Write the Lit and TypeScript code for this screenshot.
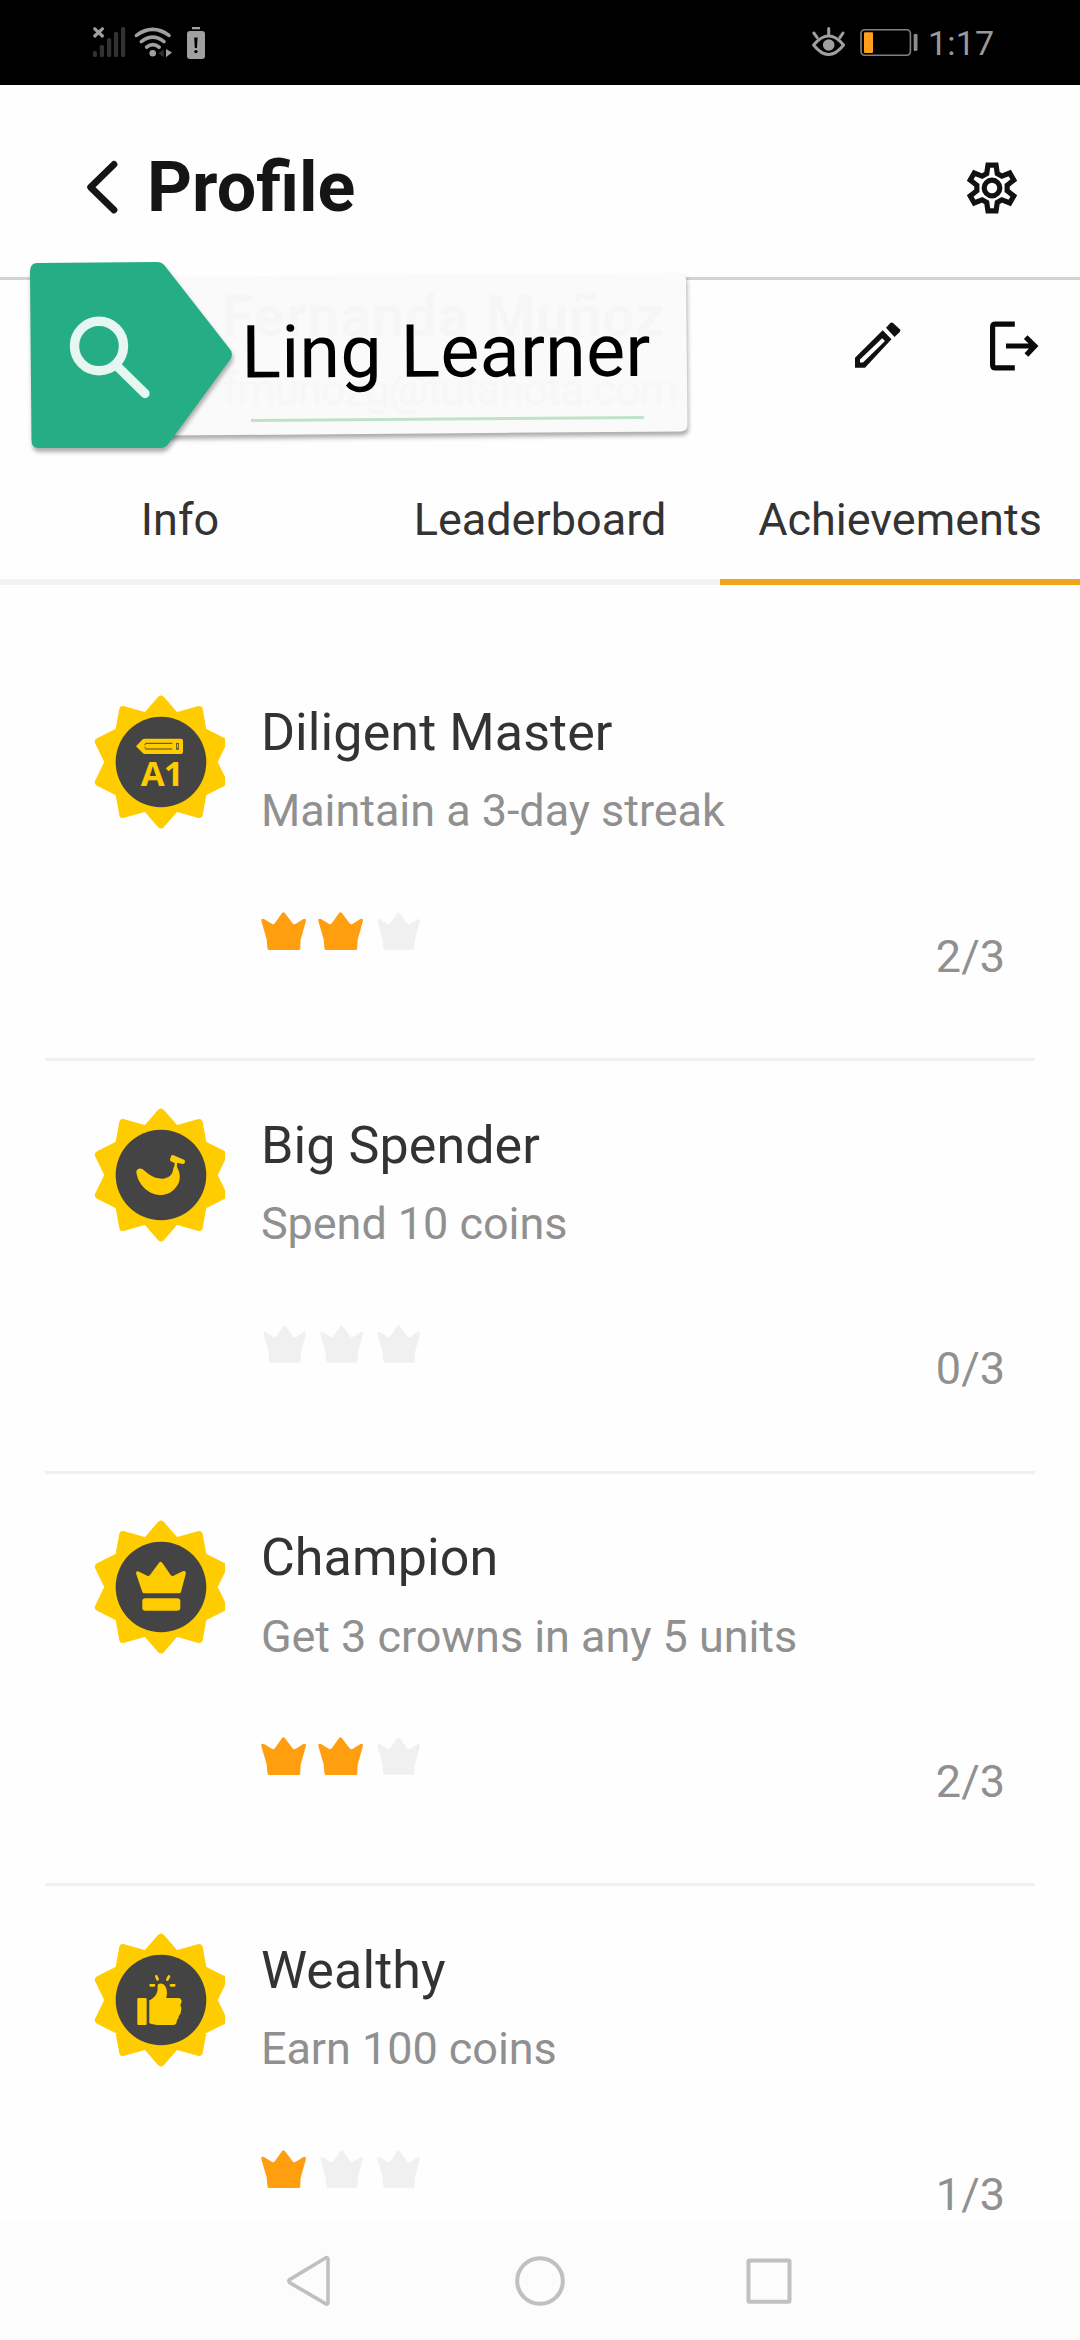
import { LitElement, html, css, svg } from "lit";
import { customElement, property } from "lit/decorators.js";

type BadgeKind = "streak" | "banana" | "crown" | "thumb";

interface Achievement {
  kind: BadgeKind;
  title: string;
  detail: string;
  earned: number;
}

const ACHIEVEMENTS: Achievement[] = [
  { kind: "streak", title: "Diligent Master", detail: "Maintain a 3-day streak", earned: 2 },
  { kind: "banana", title: "Big Spender", detail: "Spend 10 coins", earned: 0 },
  { kind: "crown", title: "Champion", detail: "Get 3 crowns in any 5 units", earned: 2 },
  { kind: "thumb", title: "Wealthy", detail: "Earn 100 coins", earned: 1 },
];

const polar = (deg: number, r: number): string => {
  const a = (deg * Math.PI) / 180;
  return `${(Math.sin(a) * r).toFixed(2)},${(-Math.cos(a) * r).toFixed(2)}`;
};

// Ten-pointed seal outline: tips every 36 degrees, valleys halfway between.
const SEAL = (() => {
  const tips = [187, 193, 196, 196, 193, 187, 193, 196, 196, 193];
  const valleys = [143, 155, 157, 155, 143, 143, 155, 157, 155, 143];
  return tips.map((t, i) => `${polar(i * 36, t)} ${polar(i * 36 + 18, valleys[i])}`).join(" ");
})();

const GEAR = [0, 60, 120, 180, 240, 300]
  .map((b) => [polar(b - 20, 15.4), polar(b - 10, 23.2), polar(b + 10, 23.2), polar(b + 20, 15.4)].join(" "))
  .join(" ");

const EMBLEMS = {
  streak: svg`
    <path d="M-75 -47L-54 -69Q-52 -70 -49 -70H60Q66 -70 66 -64V-30Q66 -24 60 -24H-49Q-52 -24 -54 -26Z" fill="#fc0"/>
    <path d="M-47 -56H34M-47 -39H34M-48 -54V-50M-48 -45V-41" stroke="#444" stroke-width="3" fill="none"/>
    <rect x="47" y="-56" width="5" height="18" fill="none" stroke="#444" stroke-width="2.5"/>
    <text x="-61" y="71" font-size="104" font-weight="700" textLength="129" lengthAdjust="spacing"
      font-family="Open Sans, Noto Sans, sans-serif" fill="#fc0">A1</text>`,
  banana: svg`
    <path d="M-74 -9C-74 -18 -64 -22 -56 -18C-38 -3 -24 10 2 11C24 11 36 -2 37 -20Q42 -28 41 -36L29 -41Q25 -44 28 -50L31 -58Q33 -61 38 -59L69 -46Q74 -43 72 -38Q70 -32 64 -33L49 -37Q47 -28 49 -22C58 -6 59 12 52 26C40 48 22 60 -4 60C-42 58 -70 24 -74 -9Z" fill="#fc0"/>`,
  crown: svg`
    <path d="M-74 -38C-77 -48 -70 -50 -64 -45L-40 -33Q-36 -32 -33 -36L-8 -70Q-1 -81 6 -70L29 -36Q32 -32 36 -33L62 -46C70 -50 77 -47 74 -38L60 15Q59 19 54 19H-50Q-55 19 -56 15Z" fill="#fc0"/>
    <rect x="-56" y="34" width="114" height="37" rx="9" fill="#fc0"/>`,
  thumb: svg`
    <rect x="-71" y="-6" width="28" height="81" rx="3" fill="#fc0"/>
    <path d="M-35 1C-20 -6 -11 -18 -10 -33V-44Q-9 -50 2 -49C13 -48 18 -34 18 -22L16 -6H54Q62 -4 62 5L58 16Q64 24 60 34Q60 42 53 48Q55 56 48 60Q48 75 36 75H-12Q-26 74 -35 70Z" fill="#fc0"/>
    <path d="M-31 -44H-21M30 -44H40M-14 -71L-10 -62M24 -71L19 -61" stroke="#fc0" stroke-width="8" stroke-linecap="round" fill="none"/>`,
};

@customElement("seal-badge")
class SealBadge extends LitElement {
  @property() kind: BadgeKind = "streak";

  static styles = css`
    :host { display: block; flex: none; width: 131.3px; height: 136px; }
    .seal { display: block; width: 131.3px; height: 136px; }
  `;

  render() {
    return html`<svg class="seal" viewBox="-201 -204 394 408">
      <polygon points=${SEAL} fill="#fc0" stroke="#fc0" stroke-width="24" stroke-linejoin="round"/>
      <circle r="136" fill="#444"/>
      ${EMBLEMS[this.kind]}
    </svg>`;
  }
}

@customElement("achievement-row")
class AchievementRow extends LitElement {
  @property({ attribute: false }) item: Achievement = ACHIEVEMENTS[0];

  static styles = css`
    :host {
      display: block;
      flex: none;
      height: 412.67px;
      box-sizing: border-box;
      margin: 0 45px;
      border-bottom: 3px solid #f0f0f0;
    }
    .row { display: flex; padding: 45.6px 30px 0 48.6px; }
    .body { flex: 1; padding: 9px 0 0 36px; display: flex; flex-direction: column; }
    .title { font-size: 52px; line-height: 60px; color: #333; letter-spacing: 0.1px; }
    .detail { margin-top: 22.3px; font-size: 45px; line-height: 52px; color: #909090; letter-spacing: -0.05px; }
    .foot { display: flex; justify-content: space-between; margin-top: 74.7px; }
    .crowns { display: flex; height: 38px; }
    .crown { display: block; width: 57px; height: 38px; overflow: visible; }
    .count { padding-top: 18.7px; font-size: 45px; line-height: 52px; color: #909090; }
  `;

  private crown(on: boolean) {
    return html`<svg class="crown" viewBox="0 0 57 38">
      <path
        transform=${on ? "" : "translate(2.2 0.3) scale(.95 .985)"}
        fill=${on ? "#ff9f0f" : "#f0f0f0"}
        d="M.3 9Q-.4 6.2 3 7L11.2 11.9Q12.8 12.7 14 11L20.9 1.2Q22.4 -.8 24 1.2L31.4 11Q32.8 12.8 34.4 11.9L42.4 7Q45.6 6.2 44.8 9.4L39.6 28L39.2 36.8Q39 38 37.6 38H7.9Q6.6 38 6.5 36.6L5.6 27Z"/>
    </svg>`;
  }

  render() {
    const { kind, title, detail, earned } = this.item;
    return html`<div class="row">
      <seal-badge .kind=${kind}></seal-badge>
      <div class="body">
        <div class="title">${title}</div>
        <div class="detail">${detail}</div>
        <div class="foot">
          <div class="crowns">${[0, 1, 2].map((i) => this.crown(i < earned))}</div>
          <div class="count">${earned}/3</div>
        </div>
      </div>
    </div>`;
  }
}

@customElement("app-root")
class AppRoot extends LitElement {
  static styles = css`
    :host {
      display: flex;
      flex-direction: column;
      position: relative;
      width: 1080px;
      height: 2340px;
      overflow: hidden;
      background: #fefefe;
      font-family: Roboto, "Liberation Sans", sans-serif;
    }
    svg { display: block; }
    .status { flex: none; height: 85px; background: #000; display: flex; justify-content: space-between; padding: 0 85px 0 90px; }
    .status-right { display: flex; }
    .clock { width: 67px; padding-top: 23px; font-size: 34px; line-height: 40px; color: #999; white-space: nowrap; letter-spacing: 0.2px; }
    .header {
      flex: none; height: 195px; box-sizing: border-box; border-bottom: 3px solid #d3d3d3;
      display: flex; align-items: flex-start; justify-content: space-between; padding: 62px 62px 0 80px;
    }
    .heading { display: flex; }
    .back { padding-top: 10px; margin-right: 23px; }
    .title { margin: 0; font-size: 70px; line-height: 80px; font-weight: 700; color: #151515; }
    .gear { padding-top: 11px; }
    .actions { flex: none; height: 180px; display: flex; justify-content: flex-end; gap: 80px; padding: 36px 37px 0 0; box-sizing: border-box; }
    .tabs { flex: none; height: 125px; display: grid; grid-template-columns: repeat(3, 1fr); }
    .tab {
      border-bottom: 6px solid #f3f3f3; text-align: center; color: #333; font-size: 45px;
      line-height: 52px; padding-top: 33.6px;
    }
    .tab.active { border-color: #f0a61a; }
    .list { flex: 1; min-height: 0; overflow: hidden; display: flex; flex-direction: column; padding-top: 63.3px; }
    .nav { flex: none; height: 118px; background: #fcfcfc; display: flex; justify-content: center; gap: 170px; padding-top: 29px; box-sizing: border-box; }
    .tag { position: absolute; left: 20px; top: 250px; overflow: visible; }
    .raised { filter: drop-shadow(1px 4px 2px rgba(0, 0, 0, 0.32)); }
  `;

  render() {
    return html`
      <div class="status">
        <svg width="130" height="85" viewBox="90 0 130 85" fill="#a0a0a0">
          <path d="M94.8 28.8L102.4 36M102.4 28.8L94.8 36" stroke="#a0a0a0" stroke-width="3.2" stroke-linecap="round"/>
          <g fill="#323232">
            <rect x="93" y="51" width="4" height="6" rx="1.5"/>
            <rect x="99.8" y="45" width="4.2" height="12" rx="1.5"/>
            <rect x="107" y="38" width="4.2" height="19" rx="1.5"/>
            <rect x="114" y="32" width="4.2" height="25" rx="1.5"/>
            <rect x="121" y="27" width="4.2" height="30" rx="1.5"/>
            <path d="M158.5 53.5L163.6 49.5V57.3Z"/>
          </g>
          <g fill="none" stroke="#a0a0a0" stroke-width="3.6" stroke-linecap="round">
            <path d="M136.4 35.4Q152.7 23.4 169 35.4"/>
            <path d="M141.3 41.6Q152.7 32.8 164 41.6"/>
            <path d="M146.6 47.2Q152.7 42.2 159.2 47.2"/>
          </g>
          <circle cx="152.7" cy="53.3" r="3.3"/>
          <path d="M166 49L172 52.6L166 57.3Z"/>
          <rect x="192" y="27" width="8" height="2.3"/>
          <rect x="187" y="31" width="18" height="28" rx="3"/>
          <path d="M194.2 37.4H197.6L197 48H194.8Z" fill="#000"/>
          <circle cx="195.9" cy="51.6" r="1.7" fill="#000"/>
        </svg>
        <div class="status-right">
          <svg width="118" height="85" viewBox="810 0 118 85" fill="none" stroke="#a0a0a0" stroke-width="3">
            <path d="M813.6 45Q828.6 27 843.6 45Q828.6 64 813.6 45Z" stroke-linejoin="round"/>
            <path d="M828.7 28.6V35M813.8 33L817.2 37.6M843 33L839.9 37.6" stroke-linecap="round"/>
            <circle cx="828.7" cy="45" r="5.8" fill="#a0a0a0" stroke="none"/>
            <rect x="861" y="29.8" width="49.4" height="25.4" rx="3.6" stroke="#808080" stroke-width="1.6"/>
            <rect x="864" y="32.3" width="9" height="20.6" rx="1" fill="#ff9f1c" stroke="none"/>
            <rect x="913.7" y="33.7" width="3.8" height="17.4" rx="1.6" fill="#8c8c8c" stroke="none"/>
          </svg>
          <div class="clock">1:17</div>
        </div>
      </div>
      <div class="header">
        <div class="heading">
          <svg class="back" width="44" height="60" viewBox="80 157 44 60" fill="none" stroke="#151515" stroke-width="6.8" stroke-linecap="round" stroke-linejoin="round">
            <path d="M114 164.4L90.6 187.2L114 210"/>
          </svg>
          <h1 class="title">Profile</h1>
        </div>
        <svg class="gear" width="52" height="60" viewBox="-26 -30 52 60" fill="none" stroke="#121212" stroke-width="5.2">
          <polygon points=${GEAR}/>
          <circle r="7.8"/>
        </svg>
      </div>
      <div class="actions">
        <svg width="55" height="60" viewBox="850 316 55 60" fill="#111">
          <path fill-rule="evenodd" d="M855 357.7L882.7 330.3L891.5 339.3L865 367.7H855ZM860 359.4V362.4H863L885 341L882.2 338.2Z"/>
          <path d="M886 327.7L890.3 323Q891.7 321.8 893 323L899.8 329.3Q901 330.7 899.8 332L894.5 337Z"/>
        </svg>
        <svg width="58" height="60" viewBox="985 316 58 60" fill="none" stroke="#0a0a0a" stroke-width="5.2">
          <path d="M1014.8 324.2H995.5Q992.6 324.2 992.6 327V365Q992.6 367.9 995.5 367.9H1014.8"/>
          <path d="M1006 346H1034M1025.7 337.2L1034.8 346L1026.4 355"/>
        </svg>
      </div>
      <div class="tabs">
        <div class="tab">Info</div>
        <div class="tab">Leaderboard</div>
        <div class="tab active">Achievements</div>
      </div>
      <div class="list">
        ${ACHIEVEMENTS.map((item) => html`<achievement-row .item=${item}></achievement-row>`)}
      </div>
      <div class="nav">
        <svg width="60" height="60" viewBox="280 2251 60 60" fill="none" stroke="#c0c0c0" stroke-width="3.6" stroke-linejoin="round">
          <path d="M328 2259V2303Q327 2305 325.5 2303.6L289.6 2282.6Q288.2 2281 289.6 2279.6L325.5 2258Q327 2257 328 2259Z"/>
        </svg>
        <svg width="60" height="60" viewBox="510 2251 60 60" fill="none" stroke="#c0c0c0" stroke-width="4">
          <circle cx="540" cy="2281" r="22.8"/>
        </svg>
        <svg width="60" height="60" viewBox="740 2251 60 60" fill="none" stroke="#c0c0c0" stroke-width="4">
          <rect x="748.5" y="2260.4" width="41" height="41.4" rx="1"/>
        </svg>
      </div>
      <svg class="tag" width="690" height="220" viewBox="20 250 690 220">
        <path class="raised" fill="#fafafa" d="M155 276.5L440 275L680 273Q686 273 686 280L687.5 425Q687.5 431 681 431.4L165 435.6Z"/>
        <text x="222" y="335.6" font-size="57" font-weight="700" textLength="442" lengthAdjust="spacing" fill="#f6f6f6">Fernanda Muñoz</text>
        <text x="223" y="405" font-size="44" textLength="455" lengthAdjust="spacing" fill="#f7f7f7">fmunozg@tutanota.com</text>
        <path class="raised" fill="#25ad85" d="M30 272Q30 263 37 263L157 262Q162 262 165 266L229 348Q235 354 229 361L169 443Q166 448 160 448H38Q31.5 448 31.5 440Z"/>
        <g fill="none" stroke="#e6f6f1" stroke-width="9.4">
          <ellipse cx="99" cy="346" rx="24.5" ry="24.7"/>
          <path d="M118 367L145 393.5" stroke-linecap="round"/>
        </g>
        <text x="241.5" y="377.4" font-size="73.5" textLength="409" lengthAdjust="spacing" fill="#000" transform="rotate(-.22 241 377)">Ling Learner</text>
        <path d="M251 420.4L644 417.6" stroke="#bfe3c7" stroke-width="3"/>
      </svg>
    `;
  }
}
